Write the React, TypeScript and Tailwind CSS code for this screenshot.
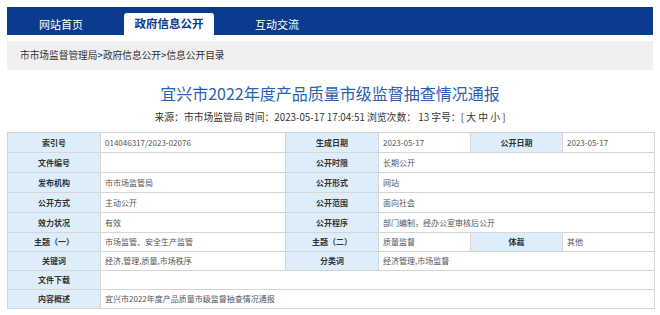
import React from "react";

const font = { fontFamily: '"Noto Sans CJK SC", "Noto Sans", sans-serif' };

function Label({ children }: { children?: React.ReactNode }) {
  return (
    <td className="border border-[#d6d6d6] bg-[#ddedf9] text-center text-[8px] font-bold text-[#333]">
      {children}
    </td>
  );
}

function Value({ children, colSpan }: { children?: React.ReactNode; colSpan?: number }) {
  return (
    <td colSpan={colSpan} className="border border-[#d6d6d6] bg-white px-1 text-[8px] text-[#555]">
      {children}
    </td>
  );
}

export default function App() {
  const tabs = ["网站首页", "政府信息公开", "互动交流"];

  return (
    <div className="w-[660px] h-[315px] overflow-hidden bg-white pt-[7px]" style={font}>
      {/* top nav */}
      <div className="mx-[7px] flex h-[28px] items-end bg-[#0b3a8e]">
        {tabs.map((t, i) => (
          <div key={t} className="flex w-[108px] justify-center">
            {i === 1 ? (
              <div className="flex h-[22px] w-[90px] items-center justify-center rounded-t-[3px] bg-white text-[11.5px] font-bold text-[#0b3a8e]">
                {t}
              </div>
            ) : (
              <div className="flex h-[22px] items-center text-[11px] text-white">{t}</div>
            )}
          </div>
        ))}
      </div>

      {/* breadcrumb */}
      <div className="mx-[7px] mt-[6px] flex h-[29px] items-center bg-[#f0f0f0] px-[13px] text-[9.7px] text-[#333]">
        市市场监督管理局&gt;政府信息公开&gt;信息公开目录
      </div>

      {/* title */}
      <h1 className="mt-[12px] text-center text-[16px] leading-[22px] text-[#2a62b3]">
        宜兴市2022年度产品质量市级监督抽查情况通报
      </h1>
      <div className="mt-[5px] text-center text-[9.8px] leading-[16px] text-[#333]">
        来源：市市场监管局 时间：2023-05-17 17:04:51 浏览次数： 13 字号：[ 大 中 小 ]
      </div>

      {/* info table */}
      <table className="mx-[7px] mt-[7px] w-[647px] table-fixed border-collapse">
        <colgroup>
          <col className="w-[93px]" />
          <col className="w-[185px]" />
          <col className="w-[93px]" />
          <col className="w-[92px]" />
          <col className="w-[92px]" />
          <col className="w-[92px]" />
        </colgroup>
        <tbody>
          <tr className="h-[20px]">
            <Label>索引号</Label>
            <Value>014046317/2023-02076</Value>
            <Label>生成日期</Label>
            <Value>2023-05-17</Value>
            <Label>公开日期</Label>
            <Value>2023-05-17</Value>
          </tr>
          <tr className="h-[20px]">
            <Label>文件编号</Label>
            <Value />
            <Label>公开时限</Label>
            <Value colSpan={3}>长期公开</Value>
          </tr>
          <tr className="h-[20px]">
            <Label>发布机构</Label>
            <Value>市市场监管局</Value>
            <Label>公开形式</Label>
            <Value colSpan={3}>网站</Value>
          </tr>
          <tr className="h-[20px]">
            <Label>公开方式</Label>
            <Value>主动公开</Value>
            <Label>公开范围</Label>
            <Value colSpan={3}>面向社会</Value>
          </tr>
          <tr className="h-[20px]">
            <Label>效力状况</Label>
            <Value>有效</Value>
            <Label>公开程序</Label>
            <Value colSpan={3}>部门编制，经办公室审核后公开</Value>
          </tr>
          <tr className="h-[19px]">
            <Label>主题（一）</Label>
            <Value>市场监管、安全生产监管</Value>
            <Label>主题（二）</Label>
            <Value>质量监督</Value>
            <Label>体裁</Label>
            <Value>其他</Value>
          </tr>
          <tr className="h-[19px]">
            <Label>关键词</Label>
            <Value>经济,管理,质量,市场秩序</Value>
            <Label>分类词</Label>
            <Value colSpan={3}>经济管理,市场监督</Value>
          </tr>
          <tr className="h-[19px]">
            <Label>文件下载</Label>
            <Value colSpan={5} />
          </tr>
          <tr className="h-[19px]">
            <Label>内容概述</Label>
            <Value colSpan={5}>宜兴市2022年度产品质量市级监督抽查情况通报</Value>
          </tr>
        </tbody>
      </table>
    </div>
  );
}
